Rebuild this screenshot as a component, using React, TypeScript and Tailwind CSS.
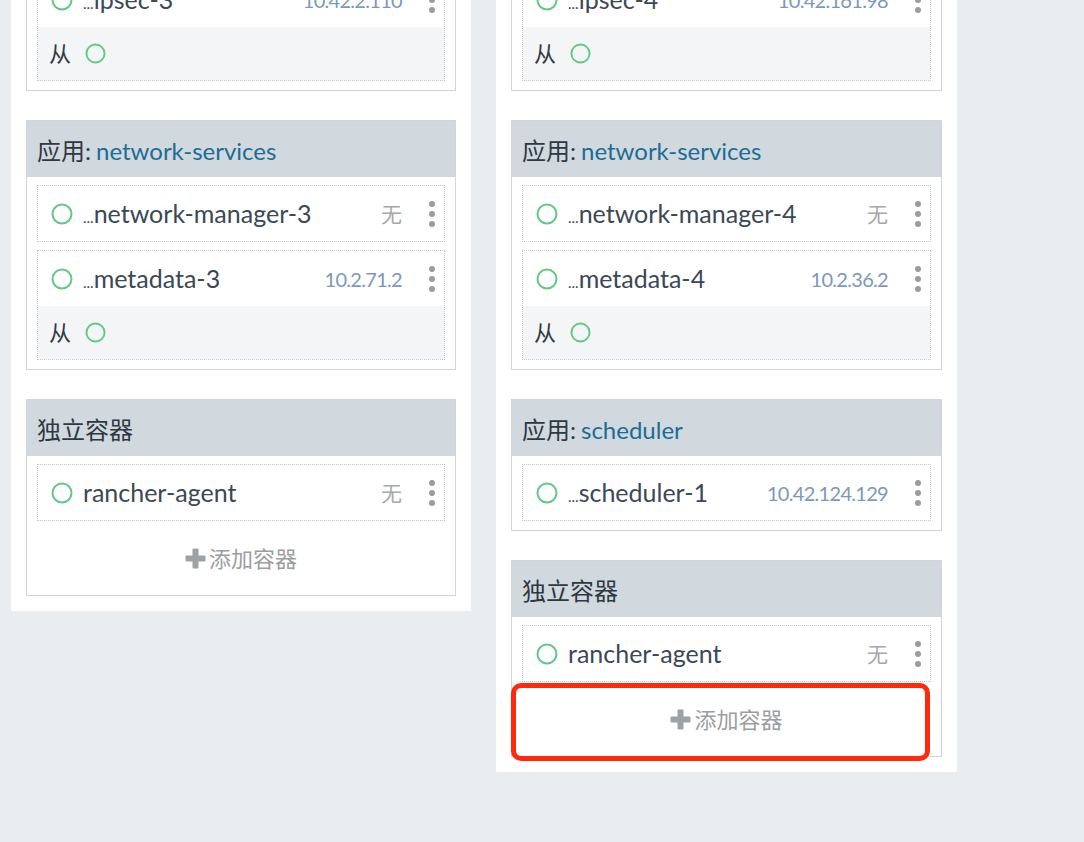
import type { ReactNode } from 'react'

type Row = {
  name: string
  ip?: string
  sidekick?: boolean
  short?: boolean
}

type CardData = {
  kind: 'app' | 'standalone'
  title?: string
  rows: Row[]
  addButton?: boolean
  highlight?: boolean
}

const leftColumn: CardData[] = [
  { kind: 'app', title: 'ipsec', rows: [{ name: 'ipsec-3', ip: '10.42.2.110', sidekick: true, short: true }] },
  {
    kind: 'app',
    title: 'network-services',
    rows: [
      { name: 'network-manager-3', short: true },
      { name: 'metadata-3', ip: '10.2.71.2', sidekick: true, short: true },
    ],
  },
  { kind: 'standalone', rows: [{ name: 'rancher-agent' }], addButton: true },
]

const rightColumn: CardData[] = [
  { kind: 'app', title: 'ipsec', rows: [{ name: 'ipsec-4', ip: '10.42.161.98', sidekick: true, short: true }] },
  {
    kind: 'app',
    title: 'network-services',
    rows: [
      { name: 'network-manager-4', short: true },
      { name: 'metadata-4', ip: '10.2.36.2', sidekick: true, short: true },
    ],
  },
  { kind: 'app', title: 'scheduler', rows: [{ name: 'scheduler-1', ip: '10.42.124.129', short: true }] },
  { kind: 'standalone', rows: [{ name: 'rancher-agent' }], addButton: true, highlight: true },
]

function StatusRing({ size = 22 }: { size?: number }) {
  return (
    <svg width={size} height={size} viewBox="0 0 22 22" className="flex-none">
      <circle cx="11" cy="11" r="9.5" fill="none" stroke="#62c886" strokeWidth="2" />
    </svg>
  )
}

function Kebab() {
  return (
    <span className="flex w-[6px] flex-none flex-col items-center gap-[4px]">
      <span className="h-[6px] w-[6px] rounded-full bg-[#9a9c9e]" />
      <span className="h-[6px] w-[6px] rounded-full bg-[#9a9c9e]" />
      <span className="h-[6px] w-[6px] rounded-full bg-[#9a9c9e]" />
    </span>
  )
}

function ContainerRow({ row }: { row: Row }) {
  return (
    <div className="border border-dotted border-[#c4c8cc]">
      <div className="flex h-[55px] items-center pl-[13px] pr-[9px]">
        <StatusRing />
        <span className="ml-[10px] flex-1 truncate text-[25px] text-[#3b4856]">
          {row.short && <span className="text-[15px]">...</span>}
          {row.name}
        </span>
        {row.ip ? (
          <span className="mr-[27px] text-[20px] tracking-[-0.7px] text-[#7c98bb]">{row.ip}</span>
        ) : (
          <span className="mr-[27px] text-[21px] text-[#a6a8aa]">无</span>
        )}
        <Kebab />
      </div>
      {row.sidekick && (
        <div className="flex h-[53px] items-center gap-[14px] bg-[#f3f5f7] pl-[11px]">
          <span className="text-[22px] text-[#2f3a45]">从</span>
          <StatusRing size={21} />
        </div>
      )}
    </div>
  )
}

function CardHeader({ card }: { card: CardData }) {
  return (
    <div className="flex h-[56px] items-center bg-[#d1d9de] px-[10px] pt-[3px] text-[24px]">
      {card.kind === 'app' ? (
        <>
          <span className="text-[#2d3843]">应用:</span>
          <span className="ml-[5px] text-[#1b6d95]">{card.title}</span>
        </>
      ) : (
        <span className="text-[#2d3843]">独立容器</span>
      )}
    </div>
  )
}

function AddContainer({ highlight }: { highlight?: boolean }) {
  return (
    <div className="relative flex h-[74px] items-center justify-center gap-[3px] text-[22px] text-[#9b9d9f]">
      <svg width="21" height="21" viewBox="0 0 21 21" className="mt-[1px]">
        <rect x="7.5" y="0.5" width="6" height="20" rx="1" fill="#9fa2a5" />
        <rect x="0.5" y="7.5" width="20" height="6" rx="1" fill="#9fa2a5" />
      </svg>
      <span>添加容器</span>
      {highlight && (
        <div className="absolute left-[-1px] top-[1px] h-[78px] w-[419px] rounded-[10px] border-[5px] border-[#ff2a0c]" />
      )}
    </div>
  )
}

function Card({ card }: { card: CardData }) {
  return (
    <div className="border border-[#cfd5d9]">
      <CardHeader card={card} />
      <div className={`flex flex-col gap-[8px] px-[10px] pt-[8px] ${card.addButton ? '' : 'pb-[9px]'}`}>
        {card.rows.map((row) => (
          <ContainerRow key={row.name} row={row} />
        ))}
      </div>
      {card.addButton && <AddContainer highlight={card.highlight} />}
    </div>
  )
}

function HostColumn({ cards, width }: { cards: CardData[]; width: string }): ReactNode {
  return (
    <div className={`flex ${width} flex-col gap-[29px] bg-white px-[15px] pb-[15px] pt-[15px]`}>
      {cards.map((card, i) => (
        <Card key={i} card={card} />
      ))}
    </div>
  )
}

export default function App() {
  return (
    <div className="min-h-screen overflow-hidden bg-[#e9edef] font-['Lato','Noto_Sans_CJK_SC',sans-serif]">
      <div className="-mt-[109px] flex items-start gap-[25px] pl-[11px]">
        <HostColumn cards={leftColumn} width="w-[460px]" />
        <HostColumn cards={rightColumn} width="w-[461px]" />
      </div>
    </div>
  )
}
